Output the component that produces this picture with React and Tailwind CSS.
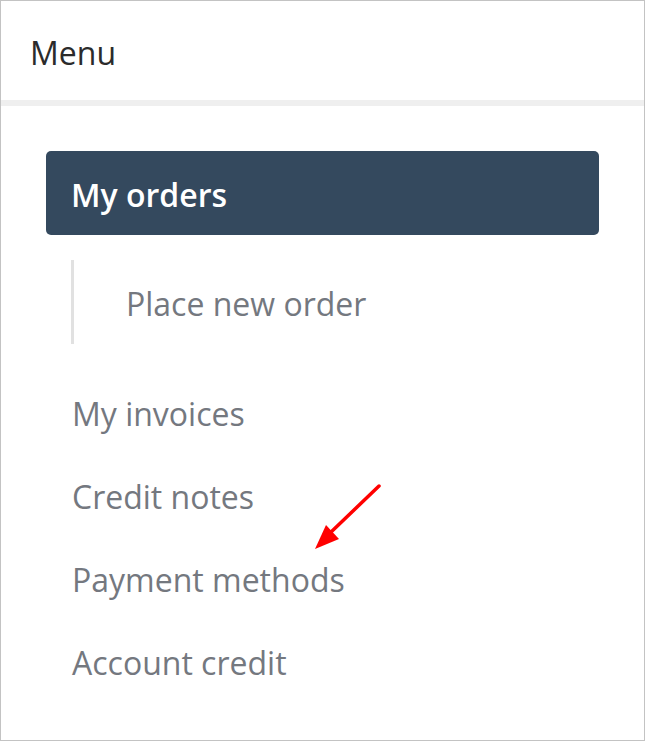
import React from 'react';

function NavItem({ label }) {
  return (
    <a href="#" className="flex h-[83px] items-center pl-[26px] pt-[3px] text-[#74787f]">
      {label}
    </a>
  );
}

export default function App() {
  return (
    <div
      className="relative h-[741px] w-[645px] overflow-hidden border border-[#c3c3c3] bg-white"
      style={{ fontFamily: '"Open Sans", "Noto Sans", sans-serif' }}
    >
      <div className="flex h-[99px] items-center px-[29px] pt-[4px] text-[32px] text-[#2b2b2b]">Menu</div>
      <div className="h-[6px] bg-[#efefef]" />

      <nav className="flex flex-col px-[45px] pt-[45px] text-[32px]">
        <a
          href="#"
          className="flex h-[84px] items-center rounded-[5px] bg-[#34495e] pl-[25px] pt-[3px] font-semibold text-white"
        >
          My orders
        </a>
        <div className="mt-[25px] mb-[27px] ml-[25px] border-l-[3px] border-[#e1e1e1]">
          <a href="#" className="flex h-[84px] items-center pl-[52px] pt-[3px] text-[#74787f]">
            Place new order
          </a>
        </div>
        <NavItem label="My invoices" />
        <NavItem label="Credit notes" />
        <NavItem label="Payment methods" />
        <NavItem label="Account credit" />
      </nav>

      <svg className="absolute left-[308px] top-[480px]" width="76" height="74" viewBox="0 0 76 74">
        <line x1="70" y1="5" x2="20" y2="53" stroke="#ff0000" strokeWidth="3.5" strokeLinecap="round" />
        <polygon points="6,68 17,44 30,58" fill="#ff0000" />
      </svg>
    </div>
  );
}
